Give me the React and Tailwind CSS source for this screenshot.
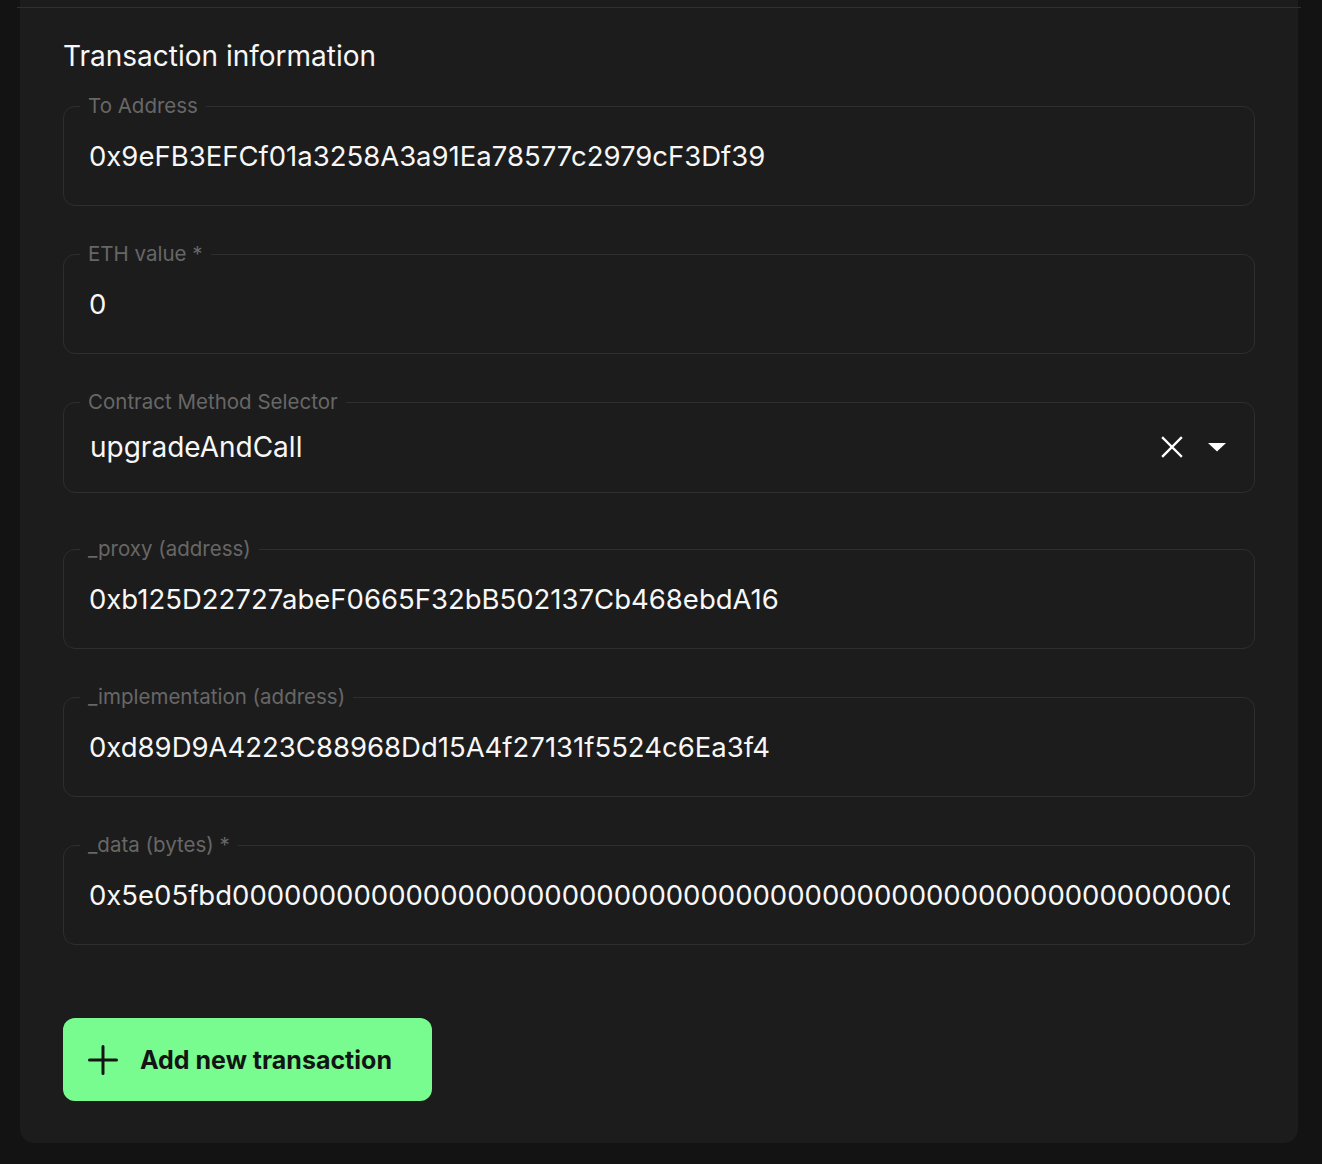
import React from "react";

const FONT = { fontFamily: "Inter, 'Noto Sans', sans-serif" };

function Field({ label, required, children, extra }) {
  return (
    <fieldset
      className={
        "min-w-0 rounded-[12px] border border-[#2e2e2e] pl-4 pr-6 " + (extra || "")
      }
    >
      <legend className="px-2 text-[20.5px] leading-6 text-[#676767]">
        {label}
        {required ? " *" : ""}
      </legend>
      {children}
    </fieldset>
  );
}

function Value({ children }) {
  return (
    <div className="ml-[9px] mt-[21px] mb-[32px] overflow-hidden whitespace-nowrap text-[27.5px] leading-[34px] text-[#f7f7f7]">
      {children}
    </div>
  );
}

export default function App() {
  const zeros = "0".repeat(120);
  return (
    <div className="min-h-[1164px] w-full bg-[#131313] pb-[21px]" style={FONT}>
      <div className="ml-[20px] mr-[24px] rounded-b-[14px] bg-[#1c1c1c] px-[43px] pt-[7px] pb-[42px]">
        <div className="-mx-[46px] h-px bg-[#303030]" />
        <h2 className="pt-[30px] text-[28px] leading-9 text-[#f7f7f7]">
          Transaction information
        </h2>
        <div className="mt-[20px] flex flex-col gap-[36px]">
          <Field label="To Address">
            <Value>0x9eFB3EFCf01a3258A3a91Ea78577c2979cF3Df39</Value>
          </Field>
          <Field label="ETH value" required>
            <Value>0</Value>
          </Field>
          <Field label="Contract Method Selector" extra="mb-2">
            <div className="mt-[16px] mb-[28px] ml-[10px] flex items-center">
              <div className="flex-1 text-[28px] leading-[34px] text-[#f7f7f7]">
                upgradeAndCall
              </div>
              <svg width="22" height="22" viewBox="0 0 22 22" className="mr-[25px]">
                <path d="M2 2 L20 20 M20 2 L2 20" stroke="#ffffff" strokeWidth="2.4" strokeLinecap="square" />
              </svg>
              <svg width="18" height="9" viewBox="0 0 18 9" className="mr-[4px]">
                <path d="M0 0 L18 0 L9 8.5 Z" fill="#ffffff" />
              </svg>
            </div>
          </Field>
          <Field label="_proxy (address)">
            <Value>0xb125D22727abeF0665F32bB502137Cb468ebdA16</Value>
          </Field>
          <Field label="_implementation (address)">
            <Value>0xd89D9A4223C88968Dd15A4f27131f5524c6Ea3f4</Value>
          </Field>
          <Field label="_data (bytes)" required>
            <Value>{"0x5e05fbd" + zeros}</Value>
          </Field>
        </div>
        <button className="mt-[73px] flex h-[83px] w-[369px] items-center rounded-[12px] bg-[#78fc8f] pl-[25px] text-[#141414]">
          <svg width="30" height="30" viewBox="0 0 30 30">
            <path d="M15 1.5 V28.5 M1.5 15 H28.5" stroke="#141414" strokeWidth="3" strokeLinecap="round" />
          </svg>
          <span className="ml-[22px] text-[25px] font-bold leading-8">Add new transaction</span>
        </button>
      </div>
    </div>
  );
}
